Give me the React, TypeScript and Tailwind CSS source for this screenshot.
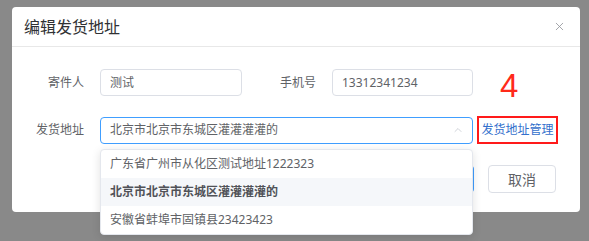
import { ChevronUp, X } from "lucide-react";

const cjk = { fontFamily: '"Noto Sans", "Noto Sans CJK SC", sans-serif' };

const options = [
  { id: 1, label: "广东省广州市从化区测试地址1222323", selected: false },
  { id: 2, label: "北京市北京市东城区灌灌灌灌的", selected: true },
  { id: 3, label: "安徽省蚌埠市固镇县23423423", selected: false },
];

export default function App() {
  return (
    <div className="h-[241px] w-[589px] overflow-hidden bg-[#898989] pt-[7px]" style={cjk}>
      <div className="relative ml-[12px] w-[568px] rounded-[4px] bg-white">
        <header className="flex h-[40px] items-center justify-between border-b border-[#e8e8e8] pl-[12px] pr-[14px]">
          <h1 className="text-[16px] leading-none text-[#303133]">编辑发货地址</h1>
          <X className="h-[13px] w-[13px] text-[#909399]" strokeWidth={1.5} />
        </header>

        <div className="pb-[19px] pt-[22px]">
          <div className="flex items-center">
            <label className="w-[72px] text-right text-[12px] text-[#606266]">寄件人</label>
            <div className="ml-[16px] flex h-[27px] w-[142px] items-center rounded-[4px] border border-[#dcdfe6] px-[9px] text-[12px] text-[#606266]">
              测试
            </div>
            <label className="w-[74px] text-right text-[12px] text-[#606266]">手机号</label>
            <div className="ml-[16px] flex h-[27px] w-[141px] items-center rounded-[4px] border border-[#dcdfe6] px-[9px] text-[12px] text-[#606266]">
              13312341234
            </div>
          </div>

          <div className="relative mt-[20px] flex items-center">
            <label className="w-[72px] text-right text-[12px] text-[#606266]">发货地址</label>
            <div className="ml-[16px] flex h-[27px] w-[373px] items-center justify-between rounded-[4px] border border-[#409eff] pl-[9px] pr-[8px] text-[12px] text-[#606266]">
              <span>北京市北京市东城区灌灌灌灌的</span>
              <ChevronUp className="h-[12px] w-[12px] text-[#c0c4cc]" strokeWidth={1.5} />
            </div>
            <div className="relative ml-[4px] flex h-[28px] w-[81px] items-center justify-center whitespace-nowrap border-2 border-[#ff1a1a] text-[12px] text-[#3370cc]">
              发货地址管理
              <span className="absolute bottom-[40px] left-[21px] text-[33px] leading-none text-[#ff2a1a]" style={{ fontFamily: '"Liberation Sans", sans-serif' }}>
                4
              </span>
            </div>

            <ul className="absolute left-[88px] top-[33px] z-10 w-[373px] rounded-[4px] border border-[#e4e7ed] bg-white shadow-[0_2px_10px_rgba(0,0,0,0.12)]">
              {options.map((o) => (
                <li
                  key={o.id}
                  className={
                    o.selected
                      ? "flex h-[28px] items-center bg-[#f5f7fa] px-[9px] text-[12px] font-bold text-[#505258]"
                      : "flex h-[28px] items-center px-[9px] text-[12px] text-[#606266]"
                  }
                >
                  {o.label}
                </li>
              ))}
            </ul>
          </div>

          <div className="mt-[21px] flex justify-end gap-[14px] pr-[24px]">
            <button className="h-[28px] w-[68px] rounded-[4px] border border-[#409eff] bg-[#409eff] text-[14px] text-white">
              确定
            </button>
            <button className="h-[28px] w-[68px] rounded-[4px] border border-[#dcdfe6] bg-white text-[14px] text-[#606266]">
              取消
            </button>
          </div>
        </div>
      </div>
    </div>
  );
}
